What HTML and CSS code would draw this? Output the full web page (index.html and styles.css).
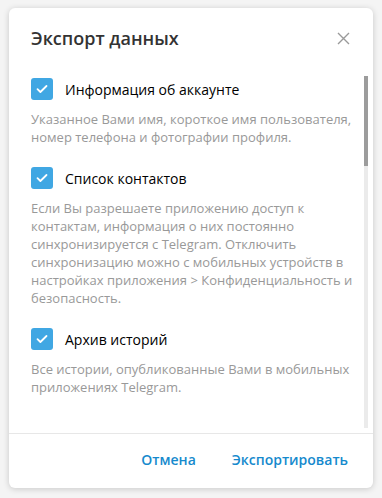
FILE: index.html
```html
<!DOCTYPE html>
<html>
<head>
  <meta charset="utf-8">
  <title>Экспорт данных</title>
  <link rel="stylesheet" href="styles.css">
</head>
<body>
  <div class="box">
    <div class="box-head">
      <span class="box-title">Экспорт данных</span>
      <span class="box-close">
        <svg width="13" height="13" viewBox="0 0 13 13"><path d="M1 1L12 12M12 1L1 12" stroke="#9a9a9a" stroke-width="1.4" fill="none"/></svg>
      </span>
    </div>
    <div class="box-body">
      <div class="scroll-inner">
        <div class="opt">
          <label class="check"><span class="mark"><svg width="12" height="10" viewBox="0 0 12 10"><path d="M1.5 5.2L4.4 8L10.5 2" stroke="#fff" stroke-width="1.8" fill="none" stroke-linecap="round" stroke-linejoin="round"/></svg></span>Информация об аккаунте</label>
          <p class="about">Указанное Вами имя, короткое имя пользователя, номер телефона и фотографии профиля.</p>
        </div>
        <div class="opt">
          <label class="check"><span class="mark"><svg width="12" height="10" viewBox="0 0 12 10"><path d="M1.5 5.2L4.4 8L10.5 2" stroke="#fff" stroke-width="1.8" fill="none" stroke-linecap="round" stroke-linejoin="round"/></svg></span>Список контактов</label>
          <p class="about">Если Вы разрешаете приложению доступ к контактам, информация о них постоянно синхронизируется с Telegram. Отключить синхронизацию можно с мобильных устройств в настройках приложения &gt; Конфиденциальность и безопасность.</p>
        </div>
        <div class="opt">
          <label class="check"><span class="mark"><svg width="12" height="10" viewBox="0 0 12 10"><path d="M1.5 5.2L4.4 8L10.5 2" stroke="#fff" stroke-width="1.8" fill="none" stroke-linecap="round" stroke-linejoin="round"/></svg></span>Архив историй</label>
          <p class="about">Все истории, опубликованные Вами в мобильных приложениях Telegram.</p>
        </div>
      </div>
      <div class="scrollbar"><div class="thumb"></div></div>
    </div>
    <div class="box-foot">
      <button class="btn">Отмена</button>
      <button class="btn">Экспортировать</button>
    </div>
  </div>
</body>
</html>
```

FILE: styles.css
```css
html,body{
  margin: 0;
  background-color: #f4f4f4;
}
body{
  padding: 8px 9px;
  font-family: "Open Sans", "Liberation Sans", sans-serif;
}
.box{
  width: 364px;
  height: 480px;
  background-color: #fff;
  border-radius: 6px;
  box-shadow: 0 1px 6px rgba(0,0,0,0.18);
  display: flex;
  flex-direction: column;
}
.box-head{
  display: flex;
  justify-content: space-between;
  align-items: center;
  height: 68px;
  padding: 0 22px;
}
.box-title{
  font-size: 18px;
  font-weight: 600;
  color: #333;
  margin-top: -8px;
}
.box-close{
  display: flex;
  margin-right: 1px;
  margin-top: -7px;
}
.box-body{
  height: 352px;
  overflow: hidden;
  margin-right: 5px;
  display: flex;
}
.scroll-inner{
  flex: 1;
  padding: 2px 10px 0 22px;
}
.scrollbar{
  width: 4px;
  background-color: #ebebeb;
}
.thumb{
  height: 90px;
  background-color: #9c9c9c;
}
.opt{
  margin-bottom: 21px;
}
.check{
  display: flex;
  align-items: center;
  font-size: 14px;
  color: #000;
  height: 22px;
}
.mark{
  width: 22px;
  height: 22px;
  border-radius: 3px;
  background-color: #40a7e3;
  display: flex;
  align-items: center;
  justify-content: center;
  margin-right: 12px;
  flex-shrink: 0;
}
.about{
  margin: 10px 0 0;
  font-size: 13px;
  line-height: 18px;
  color: #999;
}
.box-foot{
  border-top: 1px solid #e7e7e7;
  margin-top: 5px;
  display: flex;
  justify-content: flex-end;
  align-items: center;
  gap: 36px;
  flex: 1;
  padding-right: 25px;
}
.btn{
  border: none;
  background: none;
  padding: 0;
  font-family: inherit;
  font-size: 14px;
  font-weight: 600;
  color: #168acd;
  margin-top: -3px;
}
```
